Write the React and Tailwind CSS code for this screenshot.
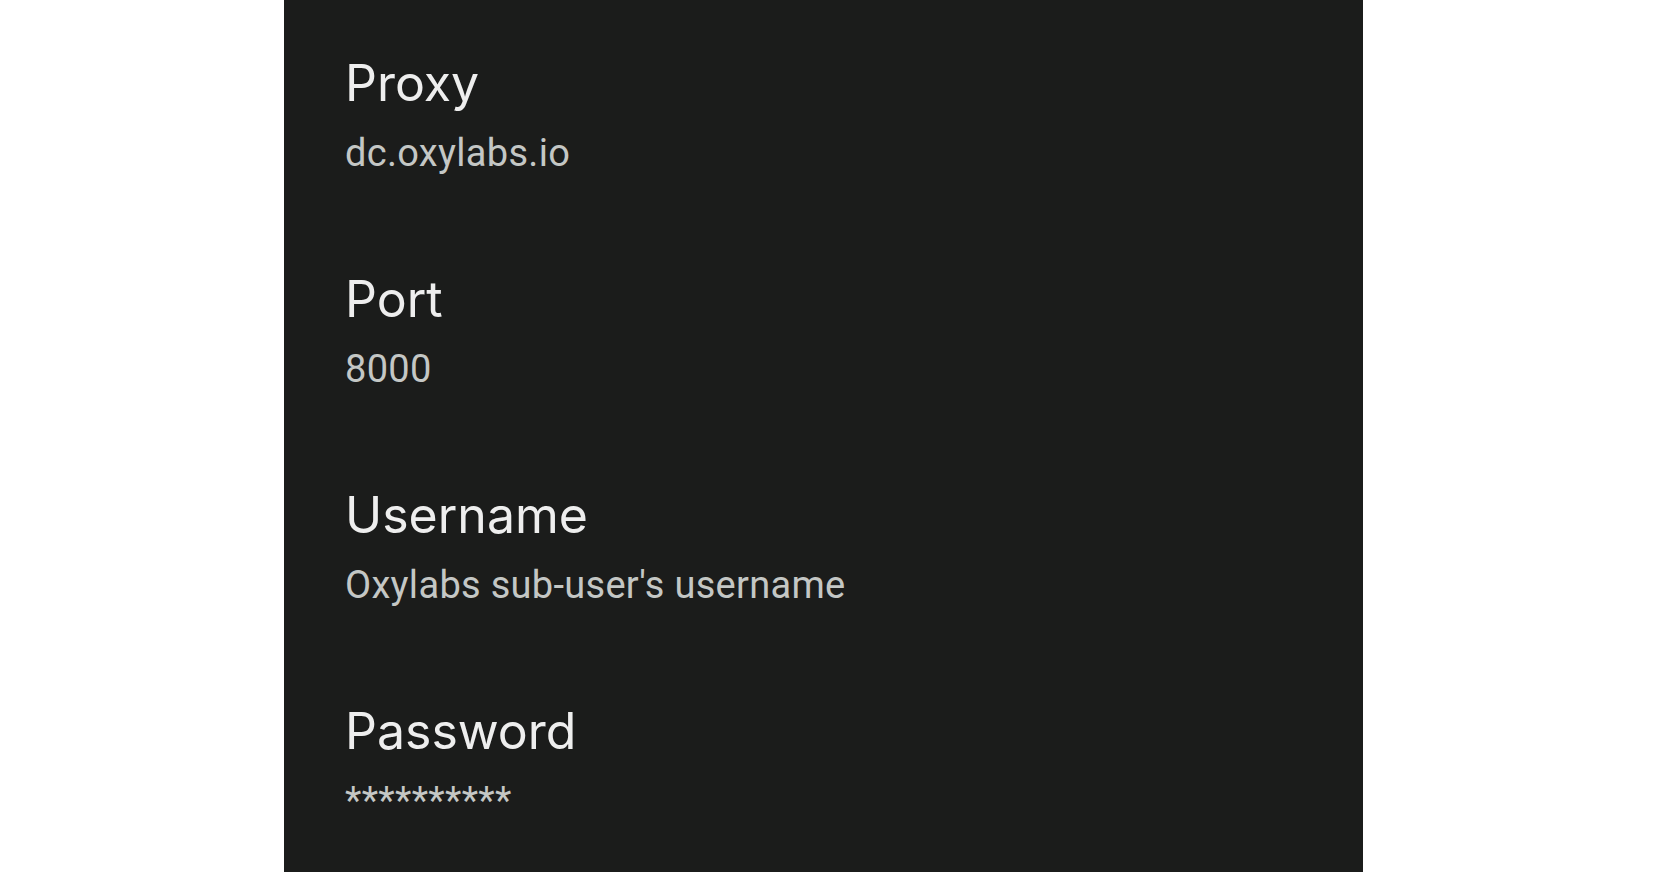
import React from 'react'

const items = [
  { title: 'Proxy', value: 'dc.oxylabs.io' },
  { title: 'Port', value: '8000' },
  { title: 'Username', value: "Oxylabs sub-user's username" },
  { title: 'Password', value: '**********' },
]

export default function App() {
  return (
    <div className="w-full h-[872px] bg-white flex justify-start overflow-hidden">
      <div className="ml-[284px] w-[1079px] h-full bg-[#1b1c1b] pl-[61px] pt-[53px] flex flex-col gap-[94px]">
        {items.map((item) => (
          <div key={item.title} className="flex flex-col">
            <div className="text-[50px] leading-[60px] text-[#eeeeee] font-normal font-['Inter',sans-serif]">
              {item.title}
            </div>
            <div className="mt-[18px] text-[38px] leading-[44px] tracking-[0.3px] text-[#c4c7c5] font-['Roboto',sans-serif]">
              {item.value}
            </div>
          </div>
        ))}
      </div>
    </div>
  )
}
